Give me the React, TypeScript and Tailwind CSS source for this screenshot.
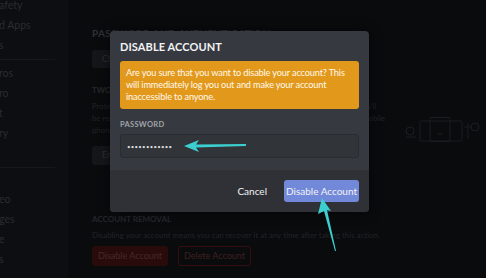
import { Fragment } from "react";

const sideItems = [
  { text: "afety", after: "" },
  { text: "d Apps", after: "" },
  { text: "s", after: "line" },
  { text: "ros", after: "" },
  { text: "ro", after: "" },
  { text: "t", after: "" },
  { text: "ry", after: "" },
  { text: "", after: "section" },
  { text: "eo", after: "" },
  { text: "ges", after: "" },
  { text: "e", after: "" },
  { text: "s", after: "" },
];

function Arrows() {
  return (
    <svg className="absolute inset-0 pointer-events-none" width="486" height="278" viewBox="0 0 486 278">
      {/* arrow pointing at the password field */}
      <polygon
        points="184,146 199,140 196,144.5 246,144 246,146 196,147.5 199,152"
        fill="#3ccfcf"
      />
      {/* arrow pointing up at the confirm button */}
      <polygon
        points="322,198 331,211 327,210 336,251 335,251 324,211 318,214"
        fill="#3ccfcf"
      />
    </svg>
  );
}

export default function App() {
  return (
    <div className="relative w-[486px] h-[278px] overflow-hidden bg-[#0a0b0d] font-['Lato',sans-serif]">
      <div className="flex h-full">
        {/* sidebar */}
        <div className="w-[68px] shrink-0 bg-[#0d0e11] -mt-[5px]">
          {sideItems.map((it, i) => (
            <Fragment key={i}>
              <div className="h-[20px] text-[10.5px] leading-[20px] text-[#2a2c30] whitespace-nowrap -ml-[1px]">
                {it.text}
              </div>
              {it.after === "line" && <div className="my-[3.5px] h-px w-[55px] bg-[#17181b]" />}
              {it.after === "section" && (
                <>
                  <div className="my-[3.5px] h-px w-[55px] bg-[#17181b]" />
                  <div className="h-[18px]" />
                </>
              )}
            </Fragment>
          ))}
        </div>

        {/* settings page behind the modal */}
        <div className="flex-1 pl-[24px] pt-[27px]">
          <div className="text-[10px] font-bold tracking-[0.3px] leading-[12px] text-[#2f3136]">
            PASSWORD AND AUTHENTICATION
          </div>
          <div className="mt-[11px] h-[18px] w-[92px] rounded-[3px] bg-[#14161a] px-[10px] text-[8.5px] leading-[18px] text-[#2e3035]">
            Change Password
          </div>
          <div className="mt-[17px] text-[8px] font-bold leading-[10px] text-[#25272b]">
            TWO-FACTOR AUTHENTICATION
          </div>
          <div className="mt-[5px] w-[296px] text-[7.8px] leading-[12px] text-[#212327]">
            <div className="whitespace-nowrap">Protect your Discord account with an extra layer of security. Once configured, you'll</div>
            <div className="whitespace-nowrap">be required to enter both your password and an authentication code from your mobile</div>
            <div className="whitespace-nowrap">phone in order to sign in.</div>
          </div>
          <div className="flex items-start">
            <div className="mt-[10px] h-[19px] w-[110px] rounded-[3px] bg-[#14161a] px-[10px] text-[8.5px] leading-[19px] text-[#2e3035]">
              Enable Two-Factor Auth
            </div>
            <svg className="ml-[202px] -mt-[19px]" width="76" height="26" viewBox="0 0 76 26" fill="none" stroke="#1b1d21" strokeWidth="1">
              <rect x="16" y="4" width="42" height="20" rx="1" />
              <rect x="26" y="0.5" width="20" height="24" rx="1" />
              <circle cx="6" cy="14" r="4" />
              <path d="M2 20h10M33 17h6M64 6v16M60 10h8" />
              <circle cx="71" cy="10" r="4" />
            </svg>
          </div>
          <div className="mt-[49px] text-[8px] font-bold leading-[10px] text-[#25272b]">
            ACCOUNT REMOVAL
          </div>
          <div className="mt-[5px] whitespace-nowrap text-[7.9px] leading-[12px] text-[#212327]">
            Disabling your account means you can recover it at any time after taking this action.
          </div>
          <div className="mt-[5px] flex gap-[10px]">
            <div className="h-[20px] w-[76px] rounded-[3px] bg-[#290b0c] text-center text-[9px] leading-[20px] text-[#4a2828]">
              Disable Account
            </div>
            <div className="h-[20px] w-[73px] rounded-[3px] border border-[#360e0f] text-center text-[9px] leading-[18px] text-[#402020]">
              Delete Account
            </div>
          </div>
        </div>
      </div>

      {/* modal */}
      <div className="absolute left-[110px] top-[31px] w-[259px] overflow-hidden rounded-[4px] bg-[#36393f] shadow-[0_0_12px_rgba(0,0,0,0.6)]">
        <div className="px-[10px] pt-[9px] pb-[12px]">
          <div className="text-[11px] font-bold leading-[14px] tracking-[0.1px] text-[#f2f3f5]">
            DISABLE ACCOUNT
          </div>
          <div className="mt-[7px] rounded-[3px] bg-[#e2981b] px-[6px] py-[6px] text-[9.2px] leading-[12px] tracking-[-0.15px] text-[#fff8ec]">
            Are you sure that you want to disable your account? This will immediately log you out and make your account inaccessible to anyone.
          </div>
          <div className="mt-[11px] text-[7.5px] font-bold leading-[9px] tracking-[0.3px] text-[#a0a3a8]">
            PASSWORD
          </div>
          <div className="mt-[5px] flex h-[24px] items-center rounded-[3px] border border-[#2a2c31] bg-[#313439] px-[6px] text-[6px] tracking-[0.3px] text-[#dcddde]">
            ••••••••••••
          </div>
        </div>
        <div className="flex h-[42px] items-center justify-end gap-[17px] bg-[#2f3136] px-[10px]">
          <span className="text-[10px] text-[#f2f3f5]">Cancel</span>
          <div className="h-[22px] w-[75px] rounded-[3px] bg-[#7289da] text-center text-[10px] leading-[22px] text-[#f2f3f5]">
            Disable Account
          </div>
        </div>
      </div>

      <Arrows />
    </div>
  );
}
